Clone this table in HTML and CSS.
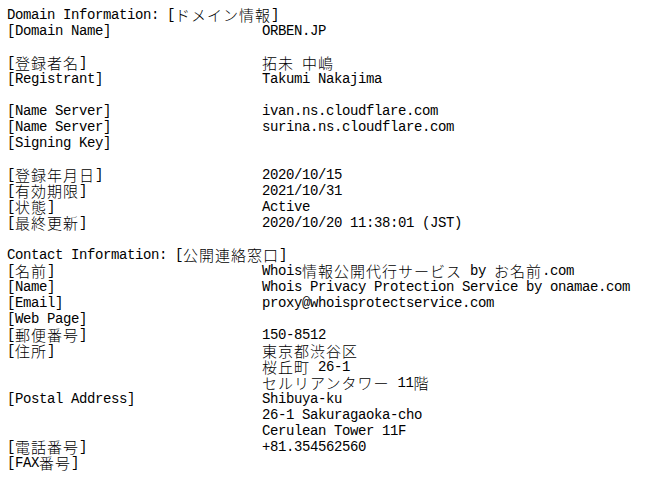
FILE: index.html
```html
<!DOCTYPE html>
<html lang="ja">
<head>
<meta charset="utf-8">
<title>Whois</title>
<link rel="stylesheet" href="styles.css">
</head>
<body>
<main class="whois">
  <section class="block">
    <div class="head">Domain Information: [<span class="j">ドメイン情報</span>]</div>
    <div class="rows">
      <div class="k">[Domain Name]</div><div class="v">ORBEN.JP</div>
    </div>
  </section>
  <section class="block">
    <div class="rows">
      <div class="k">[<span class="j">登録者名</span>]</div><div class="v"><span class="j">拓未</span> <span class="j">中嶋</span></div>
      <div class="k">[Registrant]</div><div class="v">Takumi Nakajima</div>
    </div>
  </section>
  <section class="block">
    <div class="rows">
      <div class="k">[Name Server]</div><div class="v">ivan.ns.cloudflare.com</div>
      <div class="k">[Name Server]</div><div class="v">surina.ns.cloudflare.com</div>
      <div class="k">[Signing Key]</div><div class="v"></div>
    </div>
  </section>
  <section class="block">
    <div class="rows">
      <div class="k">[<span class="j">登録年月日</span>]</div><div class="v">2020/10/15</div>
      <div class="k">[<span class="j">有効期限</span>]</div><div class="v">2021/10/31</div>
      <div class="k">[<span class="j">状態</span>]</div><div class="v">Active</div>
      <div class="k">[<span class="j">最終更新</span>]</div><div class="v">2020/10/20 11:38:01 (JST)</div>
    </div>
  </section>
  <section class="block">
    <div class="head">Contact Information: [<span class="j">公開連絡窓口</span>]</div>
    <div class="rows">
      <div class="k">[<span class="j">名前</span>]</div><div class="v">Whois<span class="j">情報公開代行サービス</span> by <span class="j">お名前</span>.com</div>
      <div class="k">[Name]</div><div class="v">Whois Privacy Protection Service by onamae.com</div>
      <div class="k">[Email]</div><div class="v">proxy@whoisprotectservice.com</div>
      <div class="k">[Web Page]</div><div class="v"></div>
      <div class="k">[<span class="j">郵便番号</span>]</div><div class="v">150-8512</div>
      <div class="k">[<span class="j">住所</span>]</div>
      <div class="v multi">
        <div class="ln"><span class="j">東京都渋谷区</span></div>
        <div class="ln"><span class="j">桜丘町</span> 26-1</div>
        <div class="ln"><span class="j">セルリアンタワー</span> 11<span class="j">階</span></div>
      </div>
      <div class="k">[Postal Address]</div>
      <div class="v multi">
        <div class="ln">Shibuya-ku</div>
        <div class="ln">26-1 Sakuragaoka-cho</div>
        <div class="ln">Cerulean Tower 11F</div>
      </div>
      <div class="k">[<span class="j">電話番号</span>]</div><div class="v">+81.354562560</div>
      <div class="k">[FAX<span class="j">番号</span>]</div><div class="v"></div>
    </div>
  </section>
</main>
</body>
</html>
```

FILE: styles.css
```css
html, body {
  margin: 0;
  padding: 0;
  background: #ffffff;
}

body {
  color: #000000;
  font-family: "Liberation Mono", "DejaVu Sans Mono", monospace;
  font-size: 14px;
  letter-spacing: -0.4px;
  line-height: 16px;
}

.whois {
  padding: 7px 0 0 7px;
  display: flex;
  flex-direction: column;
  gap: 16px;
}

.block {
  display: flex;
  flex-direction: column;
}

.head,
.k,
.v,
.ln {
  height: 16px;
  white-space: nowrap;
  overflow: visible;
}

.v.multi {
  height: auto;
}

.rows {
  display: grid;
  grid-template-columns: 255px 1fr;
}

.j {
  display: inline-block;
  vertical-align: top;
  height: 16px;
  font-family: "Noto Sans CJK JP", sans-serif;
  font-size: 15px;
  font-weight: 300;
  letter-spacing: 1px;
  line-height: 16px;
}
```
